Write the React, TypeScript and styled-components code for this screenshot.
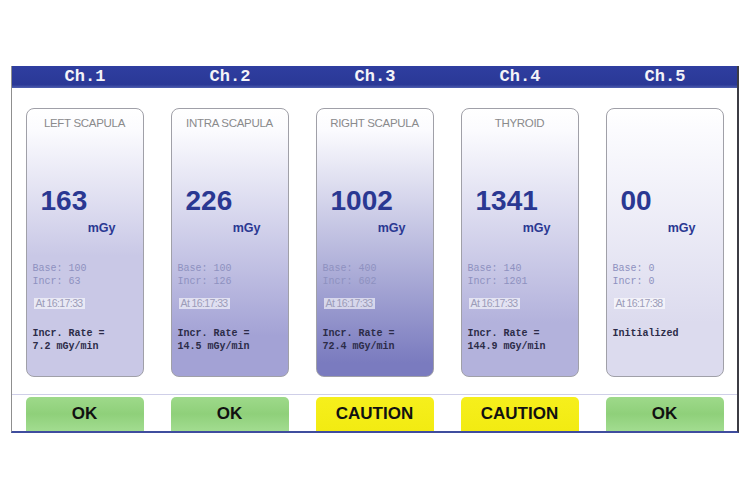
import React from "react";
import styled, { createGlobalStyle } from "styled-components";

const Global = createGlobalStyle`
  html, body { margin: 0; padding: 0; background: #ffffff; }
  body { font-family: "Liberation Sans", Arial, sans-serif; }
`;

const Page = styled.div`
  padding: 66px 0 0 11px;
  width: 750px;
  height: 500px;
  box-sizing: border-box;
`;

const Frame = styled.div`
  width: 728px;
  box-sizing: border-box;
  border-left: 1px solid #8f8f8f;
  border-right: 2px solid #3c3c44;
  border-bottom: 2px solid #3f4d9e;
  background: #ffffff;
`;

const Header = styled.div`
  display: grid;
  grid-template-columns: repeat(5, 1fr);
  height: 22px;
  background: linear-gradient(#2f3ea0, #2a3896 85%, #5060b0);
`;

const ChLabel = styled.div`
  color: #f4f4f8;
  font-family: "Liberation Mono", "Courier New", monospace;
  font-weight: bold;
  font-size: 17px;
  line-height: 22px;
  text-align: center;
  padding-left: 1px;
`;

const Body = styled.div`
  display: grid;
  grid-template-columns: repeat(5, 1fr);
  padding: 20px 0 17px;
  border-bottom: 1px solid #cfcfe8;
`;

const Cell = styled.div`
  display: flex;
  justify-content: center;
`;

const Card = styled.div<{ $tint: string; $stop: string }>`
  width: 118px;
  height: 269px;
  box-sizing: border-box;
  border: 1px solid #a0a0a8;
  border-radius: 8px;
  background: linear-gradient(#ffffff 0%, #fbfbfe 8%, ${(p) => p.$tint} ${(p) => p.$stop}, ${(p) => p.$tint} 100%);
  display: flex;
  flex-direction: column;
  overflow: hidden;
`;

const Title = styled.div`
  margin-top: 7px;
  height: 14px;
  font-size: 11.5px;
  line-height: 14px;
  letter-spacing: -0.3px;
  color: #8a8a8c;
  text-align: center;
`;

const Value = styled.div`
  margin-top: 57px;
  padding-left: 14px;
  font-size: 28px;
  line-height: 28px;
  font-weight: bold;
  color: #2a3892;
`;

const Unit = styled.div`
  margin-top: 6px;
  padding-right: 27px;
  text-align: right;
  font-size: 12.5px;
  line-height: 14px;
  font-weight: bold;
  color: #2a3892;
`;

const Stats = styled.div`
  margin-top: 27px;
  padding-left: 6px;
  font-family: "Liberation Mono", "Courier New", monospace;
  font-size: 10px;
  line-height: 13px;
  color: #8e91c0;
  white-space: pre;
`;

const TimeRow = styled.div`
  margin-top: 10px;
  padding-left: 7px;
  display: flex;
`;

const Time = styled.span`
  display: inline-block;
  height: 11px;
  padding: 0 2px;
  font-size: 10.5px;
  line-height: 11px;
  letter-spacing: -0.6px;
  color: #9c9cb8;
  background: rgba(255, 255, 255, 0.6);
`;

const Rate = styled.div`
  margin-top: 18px;
  padding-left: 6px;
  font-family: "Liberation Mono", "Courier New", monospace;
  font-size: 10px;
  line-height: 13px;
  font-weight: bold;
  color: #2c2c48;
  white-space: pre;
`;

const Footer = styled.div`
  display: grid;
  grid-template-columns: repeat(5, 1fr);
  padding: 2px 0 0;
`;

const Status = styled.div<{ $kind: "ok" | "caution" }>`
  width: 118px;
  height: 34px;
  border-radius: 5px 5px 0 0;
  display: flex;
  align-items: center;
  justify-content: center;
  font-size: 17px;
  font-weight: bold;
  color: #111111;
  background: ${(p) =>
    p.$kind === "ok"
      ? "linear-gradient(#9ed98a, #8fd07a 50%, #a2dc90)"
      : "linear-gradient(#f6ef1c, #f2eb12)"};
`;

type Ch = {
  label: string;
  title: string;
  value: string;
  base: string;
  incr: string;
  time: string;
  rate: string[];
  tint: string;
  stop: string;
  status: "ok" | "caution";
};

const channels: Ch[] = [
  { label: "Ch.1", title: "LEFT SCAPULA", value: "163", base: "100", incr: "63", time: "At 16:17:33", rate: ["Incr. Rate =", "7.2 mGy/min"], tint: "#c9c8e6", stop: "55%", status: "ok" },
  { label: "Ch.2", title: "INTRA SCAPULA", value: "226", base: "100", incr: "126", time: "At 16:17:33", rate: ["Incr. Rate =", "14.5 mGy/min"], tint: "#a3a2d5", stop: "85%", status: "ok" },
  { label: "Ch.3", title: "RIGHT SCAPULA", value: "1002", base: "400", incr: "602", time: "At 16:17:33", rate: ["Incr. Rate =", "72.4 mGy/min"], tint: "#7a7bbf", stop: "95%", status: "caution" },
  { label: "Ch.4", title: "THYROID", value: "1341", base: "140", incr: "1201", time: "At 16:17:33", rate: ["Incr. Rate =", "144.9 mGy/min"], tint: "#b3b2dc", stop: "80%", status: "caution" },
  { label: "Ch.5", title: "", value: "00", base: "0", incr: "0", time: "At 16:17:38", rate: ["Initialized"], tint: "#dcdbee", stop: "80%", status: "ok" },
];

export default function App() {
  return (
    <>
      <Global />
      <Page>
        <Frame>
          <Header>
            {channels.map((c) => (
              <ChLabel key={c.label}>{c.label}</ChLabel>
            ))}
          </Header>
          <Body>
            {channels.map((c) => (
              <Cell key={c.label}>
                <Card $tint={c.tint} $stop={c.stop}>
                  <Title>{c.title}</Title>
                  <Value>{c.value}</Value>
                  <Unit>mGy</Unit>
                  <Stats>{`Base: ${c.base}\nIncr: ${c.incr}`}</Stats>
                  <TimeRow>
                    <Time>{c.time}</Time>
                  </TimeRow>
                  <Rate>{c.rate.join("\n")}</Rate>
                </Card>
              </Cell>
            ))}
          </Body>
          <Footer>
            {channels.map((c) => (
              <Cell key={c.label}>
                <Status $kind={c.status}>{c.status === "ok" ? "OK" : "CAUTION"}</Status>
              </Cell>
            ))}
          </Footer>
        </Frame>
      </Page>
    </>
  );
}
